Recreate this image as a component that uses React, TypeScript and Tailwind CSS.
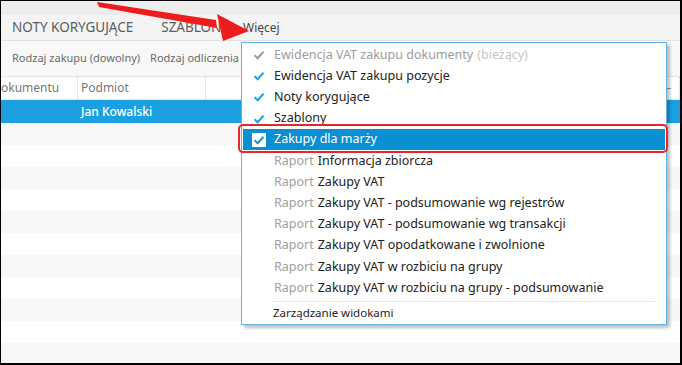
import type { ReactNode } from "react";

const FONT = { fontFamily: '"Noto Sans", "Open Sans", sans-serif' };

type Item = { prefix?: string; label: string; suffix?: string; check?: "gray" | "blue"; active?: boolean; muted?: boolean };

const ITEMS: Item[] = [
  { label: "Ewidencja VAT zakupu dokumenty", suffix: "(bieżący)", check: "gray", muted: true },
  { label: "Ewidencja VAT zakupu pozycje", check: "blue" },
  { label: "Noty korygujące", check: "blue" },
  { label: "Szablony", check: "blue" },
  { label: "Zakupy dla marży", check: "blue", active: true },
  { prefix: "Raport", label: "Informacja zbiorcza" },
  { prefix: "Raport", label: "Zakupy VAT" },
  { prefix: "Raport", label: "Zakupy VAT - podsumowanie wg rejestrów" },
  { prefix: "Raport", label: "Zakupy VAT - podsumowanie wg transakcji" },
  { prefix: "Raport", label: "Zakupy VAT opodatkowane i zwolnione" },
  { prefix: "Raport", label: "Zakupy VAT w rozbiciu na grupy" },
  { prefix: "Raport", label: "Zakupy VAT w rozbiciu na grupy - podsumowanie" },
];

function Check({ color }: { color: string }) {
  return (
    <svg width="12" height="10" viewBox="0 0 12 10" fill="none">
      <path d="M1.5 5.2 L4.6 8.2 L10.5 1.8" stroke={color} strokeWidth="2" />
    </svg>
  );
}

function MenuRow({ item }: { item: Item }) {
  let icon: ReactNode = null;
  if (item.active) {
    icon = (
      <span className="grid h-[14px] w-[14px] place-items-center rounded-[1px] bg-white">
        <Check color="#1a93d6" />
      </span>
    );
  } else if (item.check) {
    icon = <Check color={item.check === "gray" ? "#9a9a9a" : "#1ea1e3"} />;
  }
  return (
    <div
      className={`mx-[1px] flex h-[21.2px] items-center text-[12.5px] ${
        item.active ? "bg-[#0b8fd3] text-white" : item.muted ? "text-[#9c9c9c]" : "text-[#222]"
      }`}
    >
      <span className="flex w-[31px] justify-center pl-[1px]">{icon}</span>
      <span className="whitespace-nowrap">
        {item.prefix && <span className="mr-[4px] text-[#a0a0a0]">{item.prefix}</span>}
        {item.label}
        {item.suffix && <span className="ml-[4px] text-[#c4c4c4]">{item.suffix}</span>}
      </span>
    </div>
  );
}

export default function App() {
  const stripes = Array.from({ length: 11 }, (_, i) => i);
  return (
    <div
      className="relative h-[365px] w-[682px] overflow-hidden border-t border-l border-r-2 border-b-2 border-black bg-white"
      style={FONT}
    >
      <div className="h-[14px] bg-[#ededed]" />
      <div className="flex h-[26px] items-center border-b border-[#e2e2e2] bg-[#f4f4f4] text-[#5c5c5c]">
        <span className="ml-[11px] text-[13.5px]">NOTY KORYGUJĄCE</span>
        <span className="ml-[28px] text-[13.5px]">SZABLONY</span>
        <span className="ml-[14px] text-[12px] text-[#444]">Więcej</span>
      </div>
      <div className="flex h-[36px] items-center gap-[10px] border-b border-[#e4e4e4] bg-[#f8f8f8] pl-[11px] text-[11px] text-[#6a6a6a]">
        <span>Rodzaj zakupu (dowolny)</span>
        <span>Rodzaj odliczenia</span>
      </div>
      <div className="flex h-[23px] items-center border-b border-[#e6e6e6] bg-white text-[12px] text-[#777]">
        <span className="w-[76px] whitespace-nowrap">okumentu</span>
        <span className="h-full border-l border-dotted border-[#d0d0d0]" />
        <span className="w-[127px] pl-[3px]">Podmiot</span>
        <span className="h-full border-l border-dotted border-[#d0d0d0]" />
        <span className="flex-1" />
        <span className="mr-[8px] h-px w-[5px] bg-[#999]" />
        <span className="h-full border-l border-dotted border-[#d0d0d0]" />
      </div>
      <div className="flex h-[23px] items-center bg-[#1ba1e2] text-[12px] font-medium text-white">
        <span className="pl-[80px]">Jan Kowalski</span>
      </div>
      {stripes.map((i) => (
        <div key={i} className={`h-[22px] ${i % 2 === 0 ? "bg-[#f7f7f7]" : "bg-white"}`} />
      ))}

      <div className="absolute left-[240px] top-[41px] w-[426px] border border-[#5fb6e6] bg-white pt-[1.5px] pb-[1px] shadow-[3px_3px_3px_rgba(0,0,0,0.25)]">
        {ITEMS.map((item) => (
          <MenuRow key={item.label} item={item} />
        ))}
        <div className="ml-[31px] mr-[11px] mt-[2px] mb-[1px] h-px bg-[#e6e6e6]" />
        <div className="flex h-[20px] items-center pl-[31px] text-[11.5px] text-[#222]">Zarządzanie widokami</div>
      </div>

      <div className="pointer-events-none absolute left-[237px] top-[123px] h-[29px] w-[430px] rounded-[5px] border-2 border-[#e5262a]" />

      <svg className="pointer-events-none absolute left-0 top-0" width="682" height="60" viewBox="0 0 682 60">
        <polygon points="96,1 98,6 216,27 215,19" fill="#ee1c1c" />
        <polygon points="216,13 248,30 222,40" fill="#ee1c1c" />
      </svg>
    </div>
  );
}
